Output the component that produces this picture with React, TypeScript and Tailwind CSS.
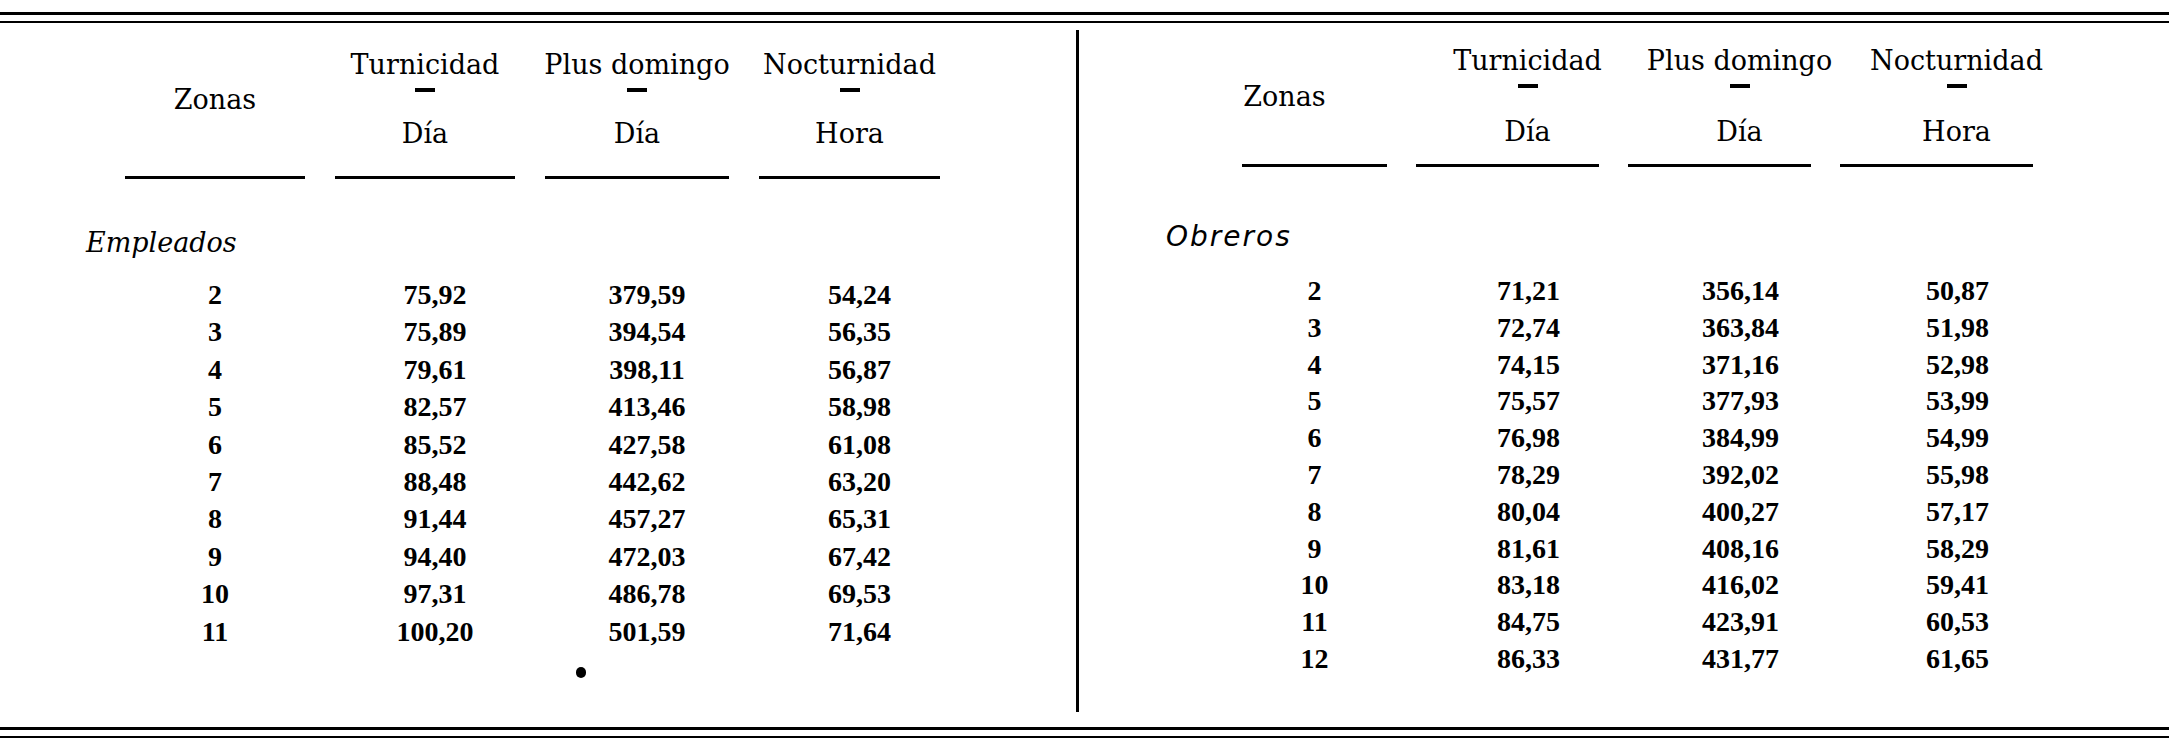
import React from 'react';

const head = "font-['DejaVu_Serif',serif] text-[27px] leading-[30px] text-black";
const num = "font-['Liberation_Serif',serif] font-bold text-[28px] text-black";

const left = [
  ['2', '75,92', '379,59', '54,24'],
  ['3', '75,89', '394,54', '56,35'],
  ['4', '79,61', '398,11', '56,87'],
  ['5', '82,57', '413,46', '58,98'],
  ['6', '85,52', '427,58', '61,08'],
  ['7', '88,48', '442,62', '63,20'],
  ['8', '91,44', '457,27', '65,31'],
  ['9', '94,40', '472,03', '67,42'],
  ['10', '97,31', '486,78', '69,53'],
  ['11', '100,20', '501,59', '71,64'],
];

const right = [
  ['2', '71,21', '356,14', '50,87'],
  ['3', '72,74', '363,84', '51,98'],
  ['4', '74,15', '371,16', '52,98'],
  ['5', '75,57', '377,93', '53,99'],
  ['6', '76,98', '384,99', '54,99'],
  ['7', '78,29', '392,02', '55,98'],
  ['8', '80,04', '400,27', '57,17'],
  ['9', '81,61', '408,16', '58,29'],
  ['10', '83,18', '416,02', '59,41'],
  ['11', '84,75', '423,91', '60,53'],
  ['12', '86,33', '431,77', '61,65'],
];

const cols = [
  ['Turnicidad', 'Día'],
  ['Plus domingo', 'Día'],
  ['Nocturnidad', 'Hora'],
];

// header block: Zonas + three titled columns, then the rules under them
function Header({ grid, diaGap, ruleGap, zonas, shift }: { grid: string; diaGap: string; ruleGap: string; zonas: string; shift: string }) {
  return (
    <div className={`grid ${grid}`}>
      <div className={`flex items-center justify-center ${zonas} ${head}`}>Zonas</div>
      {cols.map(([top, unit]) => (
        <div key={top} className={`flex flex-col items-center ${shift}`}>
          <span className={`${head} whitespace-nowrap`}>{top}</span>
          <span className="mt-[8px] h-[4px] w-[20px] bg-black" />
          <span className={`${head} ${diaGap}`}>{unit}</span>
        </div>
      ))}
      {[0, 1, 2, 3].map((i) => (
        <div key={i} className={`h-[3px] bg-black ${ruleGap}`} />
      ))}
    </div>
  );
}

function Rows({ grid, rows, rowH, shift }: { grid: string; rows: string[][]; rowH: string; shift: string }) {
  return (
    <div className="flex flex-col">
      {rows.map((r) => (
        <div key={r[0]} className={`grid ${grid} ${rowH} items-center`}>
          {r.map((v, i) => (
            <span key={i} className={`${num} text-center whitespace-nowrap ${i > 0 ? shift : ''}`}>{v}</span>
          ))}
        </div>
      ))}
    </div>
  );
}

export default function App() {
  const leftGrid = 'grid-cols-[180px_180px_184px_181px] gap-x-[30px] pl-[125px]';
  const rightGrid = 'grid-cols-[145px_183px_183px_193px] gap-x-[29px] pl-[163px]';

  return (
    <div className="w-[2169px] h-[744px] bg-white flex flex-col overflow-hidden">
      <div className="pt-[12px]">
        <div className="h-[3px] bg-black" />
        <div className="mt-[6px] h-[2px] bg-black" />
      </div>

      <div className="flex-1 flex">
        <div className="w-[1076px] pt-[27px] flex flex-col">
          <Header grid={leftGrid} diaGap="mt-[27px]" ruleGap="mt-[27px]" zonas="" shift="" />
          <div className="mt-[49px] pl-[86px]">
            <span className="font-['DejaVu_Serif',serif] italic text-[27px] leading-[30px] text-black">Empleados</span>
          </div>
          <div className="mt-[16px]">
            <Rows grid={leftGrid} rows={left} rowH="h-[37.4px]" shift="pl-[20px]" />
          </div>
          <div className="mt-[19px] pl-[576px]">
            <div className="w-[10px] h-[11px] rounded-full bg-black" />
          </div>
        </div>

        <div className="w-[3px] bg-black mt-[7px] mb-[15px]" />

        <div className="flex-1 pt-[23px] flex flex-col">
          <Header grid={rightGrid} diaGap="mt-[29px]" ruleGap="mt-[17px]" zonas="pr-[60px]" shift="pl-[40px]" />
          <div className="mt-[55px] pl-[87px]">
            <span className="font-['DejaVu_Sans',sans-serif] italic text-[28px] tracking-[2px] leading-[30px] text-black">Obreros</span>
          </div>
          <div className="mt-[18px]">
            <Rows grid={rightGrid} rows={right} rowH="h-[36.8px]" shift="pl-[42px]" />
          </div>
        </div>
      </div>

      <div className="pb-[6px]">
        <div className="h-[3px] bg-black" />
        <div className="mt-[6px] h-[2px] bg-black" />
      </div>
    </div>
  );
}
